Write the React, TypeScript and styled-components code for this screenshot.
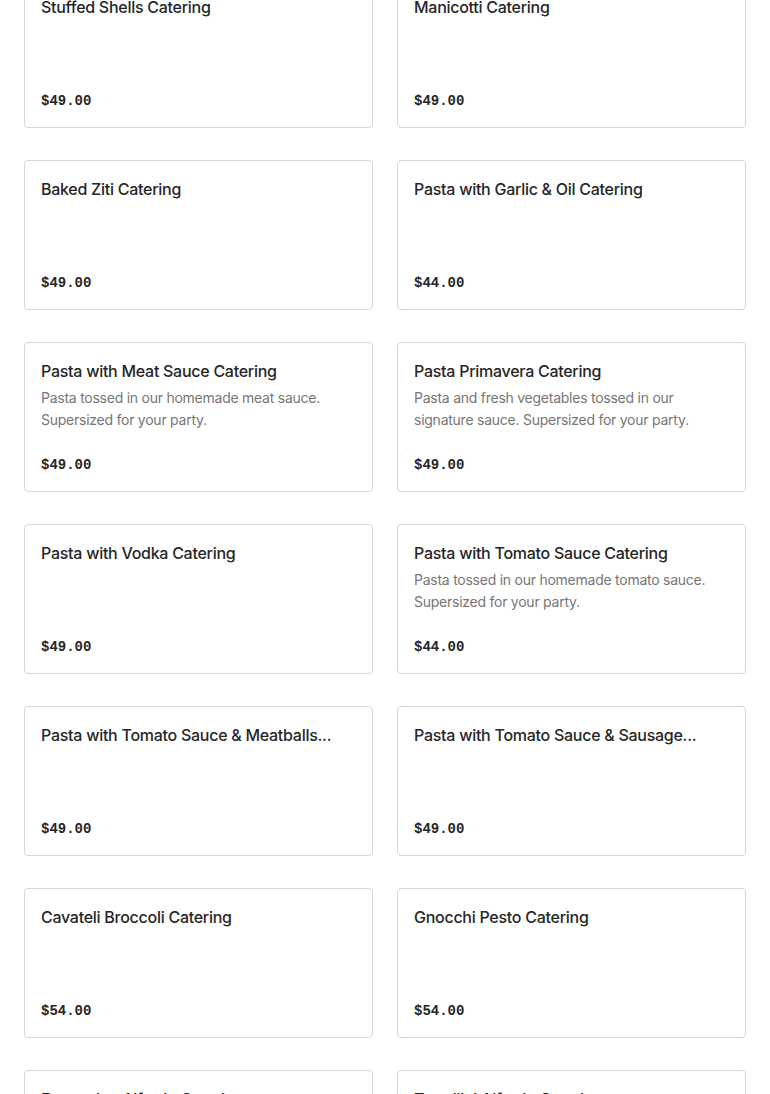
import styled, { createGlobalStyle } from "styled-components";

const GlobalStyle = createGlobalStyle`
  html, body {
    margin: 0;
    padding: 0;
    background: #ffffff;
  }
  body {
    font-family: Inter, "Noto Sans", sans-serif;
    color: #262626;
    overflow: hidden;
  }
`;

// page is shown scrolled a little, so the first row starts above the top edge
export const MenuSection = styled.section`
  margin-top: -22px;
  padding: 0 24px;
`;

export const MenuGrid = styled.ul`
  list-style: none;
  margin: 0;
  padding: 0;
  display: grid;
  grid-template-columns: 1fr 1fr;
  column-gap: 24px;
  row-gap: 32px;
`;

export const ItemCard = styled.li`
  box-sizing: border-box;
  height: 150px;
  border: 1px solid #d6d6d6;
  border-radius: 4px;
  padding: 16px;
  display: flex;
  flex-direction: column;
  background: #fff;
  cursor: pointer;
`;

export const ItemTitle = styled.h3`
  margin: 0;
  font-size: 16px;
  line-height: 24px;
  font-weight: 500;
  letter-spacing: -0.27px;
  color: #262626;
  white-space: nowrap;
  overflow: hidden;
  text-overflow: ellipsis;
`;

export const ItemDescription = styled.p`
  margin: 4px 0 0;
  font-size: 14px;
  line-height: 22px;
  font-weight: 400;
  letter-spacing: -0.25px;
  color: #767676;
`;

export const ItemPrice = styled.span`
  margin-top: auto;
  font-family: "Liberation Mono", "DejaVu Sans Mono", monospace;
  font-size: 14px;
  line-height: 20px;
  font-weight: 700;
  color: #262626;
`;

type Item = { name: string; description?: string; price: string };

const items: Item[] = [
  { name: "Stuffed Shells Catering", price: "$49.00" },
  { name: "Manicotti Catering", price: "$49.00" },
  { name: "Baked Ziti Catering", price: "$49.00" },
  { name: "Pasta with Garlic & Oil Catering", price: "$44.00" },
  {
    name: "Pasta with Meat Sauce Catering",
    description: "Pasta tossed in our homemade meat sauce. Supersized for your party.",
    price: "$49.00",
  },
  {
    name: "Pasta Primavera Catering",
    description: "Pasta and fresh vegetables tossed in our signature sauce. Supersized for your party.",
    price: "$49.00",
  },
  { name: "Pasta with Vodka Catering", price: "$49.00" },
  {
    name: "Pasta with Tomato Sauce Catering",
    description: "Pasta tossed in our homemade tomato sauce. Supersized for your party.",
    price: "$44.00",
  },
  { name: "Pasta with Tomato Sauce & Meatballs...", price: "$49.00" },
  { name: "Pasta with Tomato Sauce & Sausage...", price: "$49.00" },
  { name: "Cavateli Broccoli Catering", price: "$54.00" },
  { name: "Gnocchi Pesto Catering", price: "$54.00" },
  { name: "Fettuccine Alfredo Catering", price: "$54.00" },
  { name: "Tortellini Alfredo Catering", price: "$54.00" },
];

export default function App() {
  return (
    <>
      <GlobalStyle />
      <MenuSection>
        <MenuGrid>
          {items.map((item) => (
            <ItemCard key={item.name}>
              <ItemTitle>{item.name}</ItemTitle>
              {item.description && <ItemDescription>{item.description}</ItemDescription>}
              <ItemPrice>{item.price}</ItemPrice>
            </ItemCard>
          ))}
        </MenuGrid>
      </MenuSection>
    </>
  );
}
